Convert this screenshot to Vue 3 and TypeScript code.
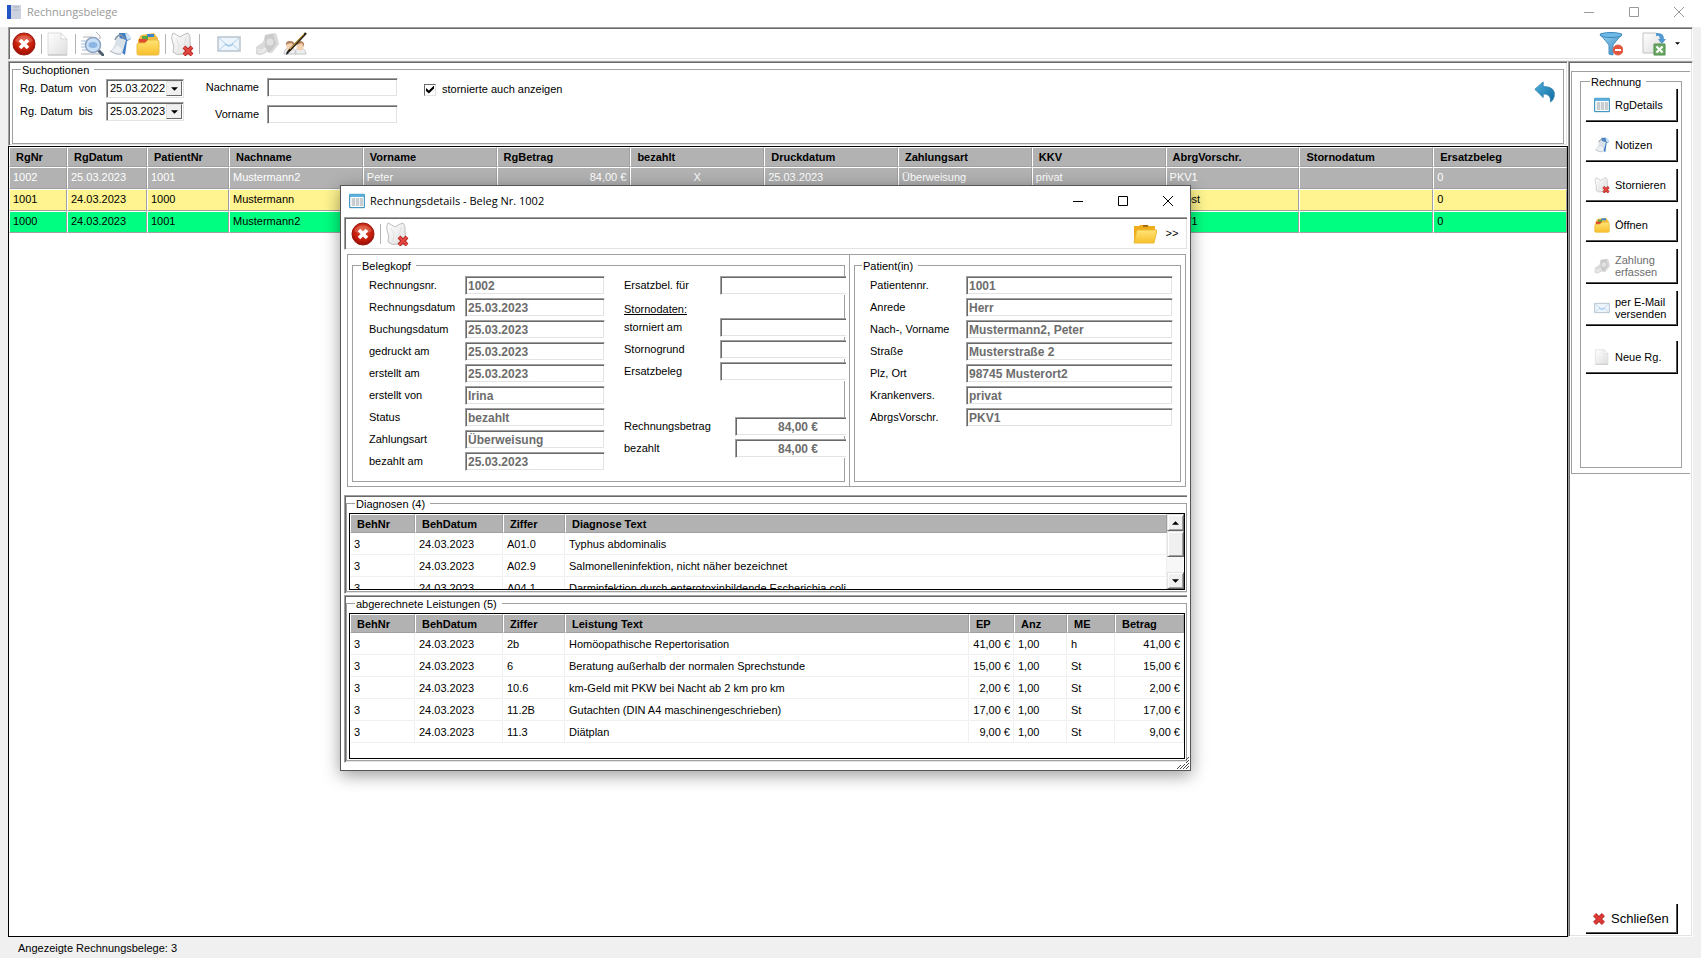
<script setup lang="ts">
import { ref } from 'vue'

interface Tool { icon: string; label: string; sep?: boolean; cls?: string }
interface Field { id: string; label: string; value: string }

const tools: Tool[] = [
  { icon: 'close', label: 'Beenden', sep: true },
  { icon: 'page', label: 'Neue Rechnung', sep: true },
  { icon: 'preview', label: 'Vorschau' },
  { icon: 'note', label: 'Notizen' },
  { icon: 'files', label: 'Öffnen', sep: true },
  { icon: 'cancel', label: 'Stornieren', sep: true },
  { icon: 'mail', label: 'per E-Mail versenden', cls: 'gap-l' },
  { icon: 'money', label: 'Zahlung erfassen', cls: 'gap-m' },
  { icon: 'users', label: 'Patient bearbeiten' },
]

const columns = ['RgNr', 'RgDatum', 'PatientNr', 'Nachname', 'Vorname', 'RgBetrag', 'bezahlt', 'Druckdatum', 'Zahlungsart', 'KKV', 'AbrgVorschr.', 'Stornodatum', 'Ersatzbeleg']
const rows = [
  { cls: 'selected', cells: ['1002', '25.03.2023', '1001', 'Mustermann2', 'Peter', '84,00 €', 'X', '25.03.2023', 'Überweisung', 'privat', 'PKV1', '', '0'] },
  { cls: 'open', cells: ['1001', '24.03.2023', '1000', 'Mustermann', '', '', '', '', '', '', 'Selbst', '', '0'] },
  { cls: 'paid', cells: ['1000', '24.03.2023', '1001', 'Mustermann2', '', '', '', '', '', '', 'PKV1', '', '0'] },
]

const actions = [
  { icon: 'table', label: 'RgDetails', cls: '' },
  { icon: 'note', label: 'Notizen', cls: '' },
  { icon: 'cancel', label: 'Stornieren', cls: '' },
  { icon: 'files', label: 'Öffnen', cls: '' },
  { icon: 'money', label: 'Zahlung\nerfassen', cls: 'tall off' },
  { icon: 'mail', label: 'per E-Mail\nversenden', cls: 'tall' },
  { icon: 'page', label: 'Neue Rg.', cls: 'apart' },
]

const head: Field[] = [
  { id: 'rgnr', label: 'Rechnungsnr.', value: '1002' },
  { id: 'rgdatum', label: 'Rechnungsdatum', value: '25.03.2023' },
  { id: 'buchung', label: 'Buchungsdatum', value: '25.03.2023' },
  { id: 'gedruckt', label: 'gedruckt am', value: '25.03.2023' },
  { id: 'erstellt', label: 'erstellt am', value: '25.03.2023' },
  { id: 'von', label: 'erstellt von', value: 'Irina' },
  { id: 'status', label: 'Status', value: 'bezahlt' },
  { id: 'zahlart', label: 'Zahlungsart', value: 'Überweisung' },
  { id: 'bezahltam', label: 'bezahlt am', value: '25.03.2023' },
]
const storno: Field[] = [
  { id: 'storniert', label: 'storniert am', value: '' },
  { id: 'grund', label: 'Stornogrund', value: '' },
  { id: 'ersatz', label: 'Ersatzbeleg', value: '' },
]
const amounts: Field[] = [
  { id: 'betrag', label: 'Rechnungsbetrag', value: '84,00 €' },
  { id: 'bezahlt', label: 'bezahlt', value: '84,00 €' },
]
const patient: Field[] = [
  { id: 'patnr', label: 'Patientennr.', value: '1001' },
  { id: 'anrede', label: 'Anrede', value: 'Herr' },
  { id: 'name', label: 'Nach-, Vorname', value: 'Mustermann2, Peter' },
  { id: 'strasse', label: 'Straße', value: 'Musterstraße 2' },
  { id: 'ort', label: 'Plz, Ort', value: '98745 Musterort2' },
  { id: 'kv', label: 'Krankenvers.', value: 'privat' },
  { id: 'abrg', label: 'AbrgsVorschr.', value: 'PKV1' },
]
const diagnoses = [
  ['3', '24.03.2023', 'A01.0', 'Typhus abdominalis'],
  ['3', '24.03.2023', 'A02.9', 'Salmonelleninfektion, nicht näher bezeichnet'],
  ['3', '24.03.2023', 'A04.1', 'Darminfektion durch enterotoxinbildende Escherichia coli'],
]
const services = [
  ['3', '24.03.2023', '2b', 'Homöopathische Repertorisation', '41,00 €', '1,00', 'h', '41,00 €'],
  ['3', '24.03.2023', '6', 'Beratung außerhalb der normalen Sprechstunde', '15,00 €', '1,00', 'St', '15,00 €'],
  ['3', '24.03.2023', '10.6', 'km-Geld mit PKW bei Nacht ab 2 km pro km', '2,00 €', '1,00', 'St', '2,00 €'],
  ['3', '24.03.2023', '11.2B', 'Gutachten (DIN A4 maschinengeschrieben)', '17,00 €', '1,00', 'St', '17,00 €'],
  ['3', '24.03.2023', '11.3', 'Diätplan', '9,00 €', '1,00', 'St', '9,00 €'],
]

const lastName = ref('')
const firstName = ref('')
const showCancelled = ref(true)
</script>

<template>
  <div class="app">
    <svg class="sprite" width="0" height="0" aria-hidden="true">
      <defs>
        <radialGradient id="gRed" cx=".5" cy=".35" r=".7"><stop offset="0" stop-color="#e2522f" /><stop offset=".6" stop-color="#c41d0b" /><stop offset="1" stop-color="#8c0a05" /></radialGradient>
        <linearGradient id="gPaper" x1="0" y1="0" x2="1" y2="1"><stop offset="0" stop-color="#fff" /><stop offset="1" stop-color="#dedede" /></linearGradient>
        <linearGradient id="gFolder" x1="0" y1="0" x2="0" y2="1"><stop offset="0" stop-color="#ffe476" /><stop offset="1" stop-color="#f8bf2c" /></linearGradient>
        <linearGradient id="gBlue" x1="0" y1="0" x2="1" y2="1"><stop offset="0" stop-color="#9fd6f3" /><stop offset="1" stop-color="#2b83c0" /></linearGradient>
        <linearGradient id="gUndo" x1="0" y1="0" x2="1" y2="1"><stop offset="0" stop-color="#4cb4e0" /><stop offset="1" stop-color="#12679c" /></linearGradient>
      </defs>
      <symbol id="close" viewBox="0 0 24 24">
        <circle cx="12" cy="12" r="11" fill="url(#gRed)" stroke="#9b1a10" />
        <path d="M3 9a9.500 8 0 0 1 18 0q-9 5-18 0z" fill="#fff" opacity=".18" />
        <path d="M8 8l8 8M16 8l-8 8" stroke="#fff" stroke-width="3.600" />
      </symbol>
      <symbol id="page" viewBox="0 0 24 24">
        <path d="M2 1h13l6 6v16H2z" fill="url(#gPaper)" stroke="#dcdcdc" />
        <path d="M2 23h19" stroke="#bdbdbd" />
        <path d="M15 1v6h6z" fill="#fff" stroke="#d8d8d8" />
      </symbol>
      <symbol id="preview" viewBox="0 0 24 24">
        <path d="M4 1h13l4 4v17H4z" fill="#fafafa" />
        <path d="M16 0l4 4v3M3 5h9M1 22h19" fill="none" stroke="#b4b4b4" />
        <path d="M1 9h6M1 12h5M1 15h5M2 18h6" stroke="#a5bdd8" />
        <path d="M18 18l5 5" stroke="#4f5e70" stroke-width="3" stroke-linecap="round" />
        <circle cx="13" cy="13" r="7.500" fill="#c9e0f7" stroke="#8ba3c0" stroke-width="1.500" />
        <ellipse cx="13" cy="13" rx="4.500" ry="3" fill="#8bb5e2" />
      </symbol>
      <symbol id="note" viewBox="0 0 24 24">
        <path d="M11 1h7q3 1 5 6l-4 2-2 14-4-3z" fill="#3f7dc4" />
        <path d="M17 1q5 1 6 6l-4 1z" fill="#cfe3f5" />
        <path d="M9 5l9 3-4 14-6 0-6-3q4-2 7-14z" fill="#d8e0e8" />
        <path d="M2 19q4 0 7-6l5 4-2 6z" fill="#eef1f4" />
        <path d="M2 19l6 3h5" fill="none" stroke="#a7b3bf" />
        <path d="M7 8q2-5 6-5l4 4" fill="none" stroke="#8595a5" stroke-width="1.500" />
      </symbol>
      <symbol id="files" viewBox="0 0 24 24">
        <path d="M2 12V8l3-5 13-2 4 5v6z" fill="#f0bd45" />
        <path d="M11 2h7v3h-7z" fill="#3f83ca" /><path d="M6 4h6v4H6z" fill="#58a644" /><path d="M3 7h8v4H3z" fill="#e04a31" />
        <path d="M1 13q0-2 2-2h6l3-3h9q2 0 2 2v11q0 2-2 2H3q-2 0-2-2z" fill="url(#gFolder)" stroke="#ebb941" />
      </symbol>
      <symbol id="cancel" viewBox="0 0 24 24">
        <path d="M3 1q4 2 7 4 4-3 8-4 3 3 2 8l1 13q-5 2-9 0-5 2-9-2Q5 14 2 8q-1-4 1-7z" fill="url(#gPaper)" stroke="#bdbdbd" />
        <path d="M6 6q5 8 1 14M16 5q-3 8 0 15" fill="none" stroke="#e2e2e2" />
        <path d="M14 15l8 8M22 15l-8 8" stroke="#b52a27" stroke-width="4" /><path d="M14 15l8 8M22 15l-8 8" stroke="#e54942" stroke-width="2" />
      </symbol>
      <symbol id="mail" viewBox="0 0 24 24">
        <path d="M1 5h22v14H1z" fill="#edf5fc" stroke="#b9c4d0" stroke-width="1.500" />
        <path d="M2 6l8 7h4l8-7M2 18l7-6M22 18l-7-6" fill="none" stroke="#b4cde4" /><path d="M8 11l4 3 4-3v2l-4 2-4-2z" fill="#9bc5ec" />
      </symbol>
      <symbol id="money" viewBox="0 0 24 24">
        <path d="M1 15l7-5 2-7 9-2q3 0 3 3l2 8-7 9-5-1q-6 5-11 2z" fill="#dadada" />
        <path d="M10 3l8-1 3 10-7 9-4-6z" fill="#cacaca" /><circle cx="15" cy="10" r="3.500" fill="#e2e2e2" /><path d="M2 17q4 3 9-1M3 20q5 1 8-3" fill="none" stroke="#ececec" stroke-width="1.500" />
      </symbol>
      <symbol id="users" viewBox="0 0 24 24">
        <path d="M1 22q0-6 6-6t6 6zM12 22q0-6 5-6t6 6z" fill="#eceef0" stroke="#c6c6c6" />
        <ellipse cx="7" cy="14" rx="3.500" ry="4.500" fill="#f3d2b2" /><ellipse cx="17" cy="14" rx="3.500" ry="4.500" fill="#f3d2b2" />
        <path d="M3 14q-1-5 4-5t4 4l-3-2-4 1zM13 13q0-4 4-4 5 0 4 6l-2-4z" fill="#b07f57" />
        <path d="M5 20L23 1" stroke="#2b2318" stroke-width="2.500" /><path d="M7 17L21 2" stroke="#e0ae3c" /><path d="M3 23l1-4 2 2z" fill="#151515" />
      </symbol>
      <symbol id="filter" viewBox="0 0 24 24">
        <path d="M1 2l9 11v9l4 1V13l9-11z" fill="url(#gBlue)" stroke="#4992c1" /><ellipse cx="12" cy="3" rx="11" ry="2.500" fill="#6fb9e6" stroke="#3989bd" />
        <circle cx="19" cy="18" r="5" fill="#e4543c" stroke="#d9634f" /><path d="M16 18h6" stroke="#fff" stroke-width="2" />
      </symbol>
      <symbol id="export" viewBox="0 0 24 24">
        <path d="M1 1h13l4 4v16H1z" fill="url(#gPaper)" stroke="#c2c2c2" /><path d="M14 1q8-1 8 6h2l-4 5-4-5h2q0-4-4-3z" fill="#5299d2" />
        <path d="M12 12h11v11H12z" fill="#6fa968" stroke="#4b8f48" /><path d="M14.500 14.500l6 6M20.500 14.500l-6 6" stroke="#fff" stroke-width="2" />
      </symbol>
      <symbol id="undo" viewBox="0 0 24 24">
        <path d="M1 9l9-8v5q14 0 12 11-1 4-4 6 1-9-8-9v4z" fill="url(#gUndo)" stroke="#3585b0" />
      </symbol>
      <symbol id="table" viewBox="0 0 24 24">
        <path d="M1 2h22v20H1z" fill="#fff" stroke="#2484b5" stroke-width="1.500" /><path d="M1 2h22v4H1z" fill="#5eb0dc" />
        <path d="M4 9h5M10 9h5M16 9h5M4 12h5M10 12h5M16 12h5M4 15h5M10 15h5M16 15h5M4 18h5M10 18h5M16 18h5" stroke="#909aa3" stroke-width="1.500" />
      </symbol>
      <symbol id="folder" viewBox="0 0 24 24">
        <path d="M1 21V4h5l1-1h8l1 1h6v5l-3 12z" fill="#eeae1c" /><path d="M10 3h5v2h-5z" fill="#a66d13" /><path d="M4 8h20l-3 13H1z" fill="url(#gFolder)" stroke="#eeba36" />
      </symbol>
      <symbol id="book" viewBox="0 0 16 16">
        <path d="M1 1h14v14H1z" fill="#ccd2df" /><path d="M1 1h4v14H1z" fill="#2356c4" /><path d="M7 3h6M7 6h6" stroke="#a9b0c0" />
      </symbol>
      <symbol id="cross" viewBox="0 0 16 16">
        <path d="M3 3l10 10M13 3L3 13" stroke="#b03030" stroke-width="5" /><path d="M3 3l10 10M13 3L3 13" stroke="#e23a34" stroke-width="3" />
      </symbol>
      <symbol id="w-min" viewBox="0 0 12 12"><path d="M1 6.500h10" stroke="currentColor" /></symbol>
      <symbol id="w-max" viewBox="0 0 12 12"><path d="M1.500 1.500h9v9h-9z" fill="none" stroke="currentColor" /></symbol>
      <symbol id="w-close" viewBox="0 0 12 12"><path d="M1 1l10 10M11 1L1 11" stroke="currentColor" /></symbol>
      <symbol id="up" viewBox="0 0 8 4"><path d="M0 4l4-4 4 4z" /></symbol>
      <symbol id="down" viewBox="0 0 8 4"><path d="M0 0l4 4 4-4z" /></symbol>
    </svg>

    <header class="titlebar inactive">
      <svg class="i16"><use href="#book" /></svg>
      <h1>Rechnungsbelege</h1>
      <div class="winbtns">
        <button v-for="w in ['min', 'max', 'close']" :key="w" :aria-label="w"><svg class="i12"><use :href="'#w-' + w" /></svg></button>
      </div>
    </header>

    <div class="frame">
      <nav class="toolbar sunken">
        <template v-for="t in tools" :key="t.icon">
          <button class="tool" :class="t.cls" :aria-label="t.label"><svg class="i24"><use :href="'#' + t.icon" /></svg></button>
          <i v-if="t.sep" class="sep"></i>
        </template>
        <span class="fill"></span>
        <button class="tool" aria-label="Filter aufheben"><svg class="i24"><use href="#filter" /></svg></button>
        <button class="tool export" aria-label="Exportieren"><svg class="i24"><use href="#export" /></svg><svg class="arrow small"><use href="#down" /></svg></button>
      </nav>

      <div class="work">
        <main class="main">
          <section class="sunken search">
            <fieldset>
              <legend>Suchoptionen</legend>
              <div class="searchrow">
                <div class="dates">
                  <label for="dvon">{{ 'Rg. Datum  von' }}</label>
                  <div class="combo"><select id="dvon"><option>25.03.2022</option></select><span class="drop"><svg class="arrow"><use href="#down" /></svg></span></div>
                  <label for="dbis">{{ 'Rg. Datum  bis' }}</label>
                  <div class="combo"><select id="dbis"><option>25.03.2023</option></select><span class="drop"><svg class="arrow"><use href="#down" /></svg></span></div>
                </div>
                <div class="names">
                  <label for="nn">Nachname</label><input id="nn" v-model="lastName" class="box" type="text" />
                  <label for="vn">Vorname</label><input id="vn" v-model="firstName" class="box" type="text" />
                </div>
                <label class="check"><input v-model="showCancelled" type="checkbox" />stornierte auch anzeigen</label>
                <span class="fill"></span>
                <button class="tool undo" aria-label="Zurücksetzen"><svg class="i24"><use href="#undo" /></svg></button>
              </div>
            </fieldset>
          </section>

          <div class="grid">
            <table class="invoices">
              <colgroup><col class="w-nr" /><col class="w-date" /><col class="w-pat" /><col v-for="n in 10" :key="n" /></colgroup>
              <thead><tr><th v-for="c in columns" :key="c">{{ c }}</th></tr></thead>
              <tbody>
                <tr v-for="r in rows" :key="r.cells[0]" :class="r.cls">
                  <td v-for="(c, i) in r.cells" :key="i" :class="{ right: i === 5, center: i === 6 }">{{ c }}</td>
                </tr>
              </tbody>
            </table>
          </div>
        </main>

        <aside class="side sunken">
          <div class="sidebox">
            <fieldset>
              <legend>Rechnung</legend>
              <button v-for="a in actions" :key="a.label" class="push" :class="a.cls" :disabled="a.cls.includes('off')">
                <svg class="i16"><use :href="'#' + a.icon" /></svg><span>{{ a.label }}</span>
              </button>
            </fieldset>
          </div>
          <span class="fill"></span>
          <button class="push exit"><svg class="i14"><use href="#cross" /></svg><span>Schließen</span></button>
        </aside>
      </div>
    </div>

    <footer class="status">Angezeigte Rechnungsbelege: 3</footer>

    <section class="dialog" role="dialog" aria-labelledby="dlg-title">
      <header class="titlebar">
        <svg class="i16"><use href="#table" /></svg>
        <h2 id="dlg-title">Rechnungsdetails - Beleg Nr. 1002</h2>
        <div class="winbtns">
          <button v-for="w in ['min', 'max', 'close']" :key="w" :aria-label="w"><svg class="i12"><use :href="'#w-' + w" /></svg></button>
        </div>
      </header>
      <nav class="toolbar sunken">
        <button class="tool" aria-label="Beenden"><svg class="i24"><use href="#close" /></svg></button>
        <i class="sep"></i>
        <button class="tool" aria-label="Stornieren"><svg class="i24"><use href="#cancel" /></svg></button>
        <span class="fill"></span>
        <button class="tool" aria-label="Ordner öffnen"><svg class="i24"><use href="#folder" /></svg></button>
        <button class="more">&gt;&gt;</button>
      </nav>

      <div class="details">
        <div class="half left">
          <fieldset>
            <legend>Belegkopf</legend>
            <div class="form">
              <div v-for="f in head" :key="f.id" class="field"><label :for="f.id">{{ f.label }}</label><input :id="f.id" class="box" :value="f.value" readonly /></div>
            </div>
            <div class="form mid">
              <div class="field"><label for="ersfuer">Ersatzbel. für</label><input id="ersfuer" class="box" readonly /></div>
              <h3>Stornodaten:</h3>
              <div v-for="f in storno" :key="f.id" class="field"><label :for="f.id">{{ f.label }}</label><input :id="f.id" class="box" :value="f.value" readonly /></div>
              <div class="amounts">
                <div v-for="f in amounts" :key="f.id" class="field"><label :for="f.id">{{ f.label }}</label><input :id="f.id" class="box" :value="f.value" readonly /></div>
              </div>
            </div>
          </fieldset>
        </div>
        <div class="half patient">
          <fieldset>
            <legend>Patient(in)</legend>
            <div class="form">
              <div v-for="f in patient" :key="f.id" class="field"><label :for="f.id">{{ f.label }}</label><input :id="f.id" class="box" :value="f.value" readonly /></div>
            </div>
          </fieldset>
        </div>
      </div>

      <section class="list sunken">
        <fieldset>
          <legend>Diagnosen (4)</legend>
          <div class="grid short">
            <table class="lines">
              <colgroup><col class="l-nr" /><col class="l-date" /><col class="l-code" /><col /></colgroup>
              <thead><tr><th>BehNr</th><th>BehDatum</th><th>Ziffer</th><th>Diagnose Text</th></tr></thead>
              <tbody><tr v-for="d in diagnoses" :key="d[2]"><td v-for="(c, i) in d" :key="i">{{ c }}</td></tr></tbody>
            </table>
            <div class="scroll">
              <button class="raised" aria-label="nach oben"><svg class="arrow"><use href="#up" /></svg></button>
              <div class="raised thumb"></div>
              <span class="fill"></span>
              <button class="raised" aria-label="nach unten"><svg class="arrow"><use href="#down" /></svg></button>
            </div>
          </div>
        </fieldset>
      </section>

      <section class="list sunken grow">
        <fieldset>
          <legend>abgerechnete Leistungen (5)</legend>
          <div class="grid">
            <table class="lines">
              <colgroup><col class="l-nr" /><col class="l-date" /><col class="l-code" /><col /><col class="l-ep" /><col class="l-anz" /><col class="l-me" /><col class="l-sum" /></colgroup>
              <thead><tr><th>BehNr</th><th>BehDatum</th><th>Ziffer</th><th>Leistung Text</th><th>EP</th><th>Anz</th><th>ME</th><th>Betrag</th></tr></thead>
              <tbody><tr v-for="s in services" :key="s[2]"><td v-for="(c, i) in s" :key="i" :class="{ right: i === 4 || i === 7 }">{{ c }}</td></tr></tbody>
            </table>
          </div>
        </fieldset>
      </section>
      <svg class="grip" viewBox="0 0 14 14"><path d="M1 13l4-4M4 13l5-5M7 13l6-6M10 13l3-3M10 7l3-3M10 4l3-3" stroke="#444" /></svg>
    </section>
  </div>
</template>

<style>
body { margin: 0; }
</style>

<style scoped>
* { box-sizing: border-box; }
.app { position: relative; display: flex; flex-direction: column; min-height: 100vh; background: #f0f0f0; color: #000; font: 11px/13px "Liberation Sans", Arial, sans-serif; overflow: hidden; }
.sprite { position: absolute; }
svg { display: block; flex: none; }
button { border: 0; padding: 0; background: none; font: inherit; color: inherit; }
fieldset { margin: 0; padding: 0; border: 1px solid #a0a0a0; min-width: 0; }
legend { margin-left: 8px; padding: 1px 5px 0 1px; line-height: 12px; }
h1, h2, h3 { margin: 0; font-weight: normal; }
.fill { flex: 1; }
.i24 { width: 24px; height: 24px; }
.i16 { width: 16px; height: 16px; }
.i14 { width: 14px; height: 14px; }
.i12 { width: 12px; height: 12px; }
.arrow { width: 7px; height: 4px; }
.arrow.small { width: 5px; height: 3px; }

.titlebar { display: flex; align-items: center; background: #fff; font-family: "Open Sans", "Noto Sans", sans-serif; }
.titlebar h1, .titlebar h2 { flex: 1; margin-left: 5px; font-size: 11px; line-height: 16px; }
.titlebar.inactive { height: 27px; padding: 0 0 4px 6px; color: #999; }
.winbtns { display: flex; }
.winbtns button { width: 45px; height: 22px; display: grid; place-items: center; }

.sunken { border: 1px solid; border-color: #a0a0a0 #fff #fff #a0a0a0; box-shadow: inset 1px 1px 0 #696969, inset -1px -1px 0 #e3e3e3; background: #fff; padding: 1px; }
.frame { flex: 1; display: flex; flex-direction: column; padding: 0 8px; }
.toolbar { display: flex; align-items: center; height: 33px; }
.frame > .toolbar { margin-bottom: 1px; }
.tool { width: 28px; height: 28px; display: grid; place-items: center; }
.sep { width: 1px; height: 20px; margin: 0 2px 0 3px; background: #b4b4b4; }
.gap-l { margin-left: 13px; }
.gap-m { margin-left: 10px; }
.export { display: flex; align-items: center; justify-content: space-between; width: 38px; margin: 0 11px 0 17px; }

.work { flex: 1; display: flex; }
.main { flex: 1; min-width: 0; display: flex; flex-direction: column; }
.search { height: 85px; padding: 1px 3px 1px 3px; }
.search fieldset { height: 100%; }
.searchrow { display: flex; align-items: flex-start; padding: 2px 7px; }
.dates { display: grid; grid-template-columns: 86px 78px; gap: 4px 0; align-items: center; padding-top: 1px; }
.dates label { white-space: pre; }
.names { display: grid; grid-template-columns: 57px 131px; gap: 8px; align-items: center; justify-items: end; margin-left: 18px; }
.box { width: 100%; height: 19px; margin: 0; padding: 0 2px; border: 1px solid; border-color: #a0a0a0 #fff #fff #a0a0a0; box-shadow: inset 1px 1px 0 #696969, inset -1px -1px 0 #e3e3e3; border-radius: 0; background: #fff; font: 11px/15px "Liberation Sans", Arial, sans-serif; outline: 0; }
.combo { display: flex; height: 19px; padding: 1px; border: 1px solid; border-color: #a0a0a0 #e3e3e3 #e3e3e3 #a0a0a0; box-shadow: inset 1px 1px 0 #696969; }
.combo select { flex: 1; min-width: 0; appearance: none; border: 0; margin: 0; padding: 0 0 0 2px; background: #fff; color: #000; font: 11px/15px "Liberation Sans", Arial, sans-serif; }
.drop { width: 16px; display: grid; place-items: center; background: #f0f0f0; border: 1px solid; border-color: #e3e3e3 #696969 #696969 #e3e3e3; pointer-events: none; }
.check { display: flex; align-items: center; gap: 6px; margin-left: 26px; height: 23px; }
.check input { appearance: none; position: relative; width: 12px; height: 12px; margin: 0; border: 1px solid; border-color: #696969 #e3e3e3 #e3e3e3 #696969; background: #fff; }
.check input:checked::before { content: ""; display: block; width: 8px; height: 8px; margin: 1px; background: #000; clip-path: polygon(0 30%, 36% 62%, 100% 0, 100% 36%, 36% 100%, 0 68%); }
.undo { width: 22px; height: 22px; margin-top: 3px; }
.undo svg { width: 22px; height: 22px; }

.grid { display: flex; align-items: flex-start; flex: 1; margin-top: 0; border: 1px solid #000; background: #fff; overflow: hidden; }
table { flex: 1; width: 100%; border-collapse: separate; border-spacing: 0; table-layout: fixed; }
th, td { padding: 0 3px; text-align: left; white-space: nowrap; overflow: hidden; border: 1px solid; }
th { padding-left: 6px; background: #b2b2b2; font-weight: bold; border-color: #fff #a0a0a0 #a0a0a0 #fff; }
.right { text-align: right; }
.center { text-align: center; }
.w-nr { width: 58px; } .w-date { width: 80px; } .w-pat { width: 82px; }
.invoices th { height: 20px; }
.invoices td { height: 22px; padding-bottom: 1px; border-color: #fff #a0a0a0 #a0a0a0 #fff; }
.selected td { background: #b2b2b2; color: #fff; }
.open td { background: #fff48f; }
.paid td { background: #00ff80; }

.side { display: flex; flex-direction: column; width: 125px; padding: 9px 2px 2px 2px; }
.sidebox { height: 403px; padding: 3px 8px 5px 8px; border: 1px solid #a0a0a0; border-right: 0; }
.sidebox fieldset { height: 100%; display: flex; flex-direction: column; padding: 1px 5px 0; }
.sidebox legend { margin-left: 4px; }
.push { display: flex; align-items: center; gap: 5px; width: 92px; height: 33px; margin-bottom: 7px; padding-left: 8px; border: solid #000; border-width: 0 1px 1px 0; box-shadow: inset -1px -1px 0 #555; background: #fff; text-align: left; white-space: pre; line-height: 12px; }
.push.tall { height: 35px; }
.push.off { color: #6d6d6d; }
.push.apart { margin-top: 8px; }
.push.exit { height: 30px; margin: 0 0 0 15px; padding-left: 6px; font-size: 13px; }
.status { height: 21px; padding: 5px 18px 0; }

.dialog { position: absolute; left: 340px; top: 185px; width: 851px; height: 586px; display: flex; flex-direction: column; padding: 0 3px 6px; border: 1px solid #555; background: #fff; box-shadow: 0 4px 16px rgba(0, 0, 0, .4); }
.dialog .titlebar { height: 31px; padding: 0 0 2px 5px; margin: 0 -3px; }
.dialog .titlebar .i16 { margin-left: 3px; }
.dialog .toolbar { padding-left: 4px; border-right: 0; }
.more { width: 26px; height: 22px; margin-right: 1px; text-align: center; }
.details { display: flex; height: 233px; margin: 4px 1px 8px 3px; border: 1px solid #a0a0a0; }
.half { padding: 4px; }
.half fieldset { display: flex; height: 100%; padding: 4px 0 0 16px; }
.half legend { margin-left: -8px; }
.left { width: 502px; border-right: 1px solid #a0a0a0; }
.patient { flex: 1; }
.patient fieldset { padding-left: 15px; }
.patient .form { flex: 1; padding-right: 7px; }
.form { width: 236px; }
.field { display: grid; grid-template-columns: 96px 1fr; align-items: center; height: 19px; margin-bottom: 3px; }
.details .box { color: #6d6d6d; font-size: 12px; font-weight: bold; }
.mid { flex: 1; margin: 0 -2px 0 19px; }
.mid .box { border-right: 0; box-shadow: inset 1px 1px 0 #696969, inset 0 -1px 0 #e3e3e3; }
.mid h3 { height: 20px; padding-top: 5px; font-size: 11px; line-height: 13px; text-decoration: underline; }
.amounts { margin-top: 36px; }
.amounts .field { grid-template-columns: 111px 1fr; }
.amounts .box { padding-right: 28px; text-align: right; }

.list { flex: none; margin-bottom: 1px; display: flex; flex-direction: column; border-right: 0; box-shadow: inset 1px 1px 0 #696969, inset 0 -1px 0 #e3e3e3; padding-right: 0; }
.list fieldset { padding: 3px 1px 1px 2px; display: flex; flex: 1; flex-direction: column; }
.list legend { margin-left: 6px; }
.list .grid { flex: 1; }
.list .grid.short { flex: none; height: 77px; }
.grow { flex: 1; }
.lines th { height: 19px; padding-top: 1px; }
.lines td { height: 22px; border-color: #fff #f0f0f0 #f0f0f0 #fff; }
.l-nr { width: 65px; } .l-date { width: 88px; } .l-code { width: 62px; } .l-ep { width: 45px; } .l-anz { width: 53px; } .l-me { width: 48px; } .l-sum { width: 69px; }
.scroll { width: 17px; height: 75px; display: flex; flex-direction: column; background: #f7f7f7; }
.raised { height: 17px; display: grid; place-items: center; background: #f0f0f0; border: 1px solid; border-color: #e3e3e3 #696969 #696969 #e3e3e3; box-shadow: inset 1px 1px 0 #fff, inset -1px -1px 0 #a0a0a0; }
.thumb { height: 26px; }
.grip { position: absolute; right: 0; bottom: 0; width: 14px; height: 14px; }
</style>
